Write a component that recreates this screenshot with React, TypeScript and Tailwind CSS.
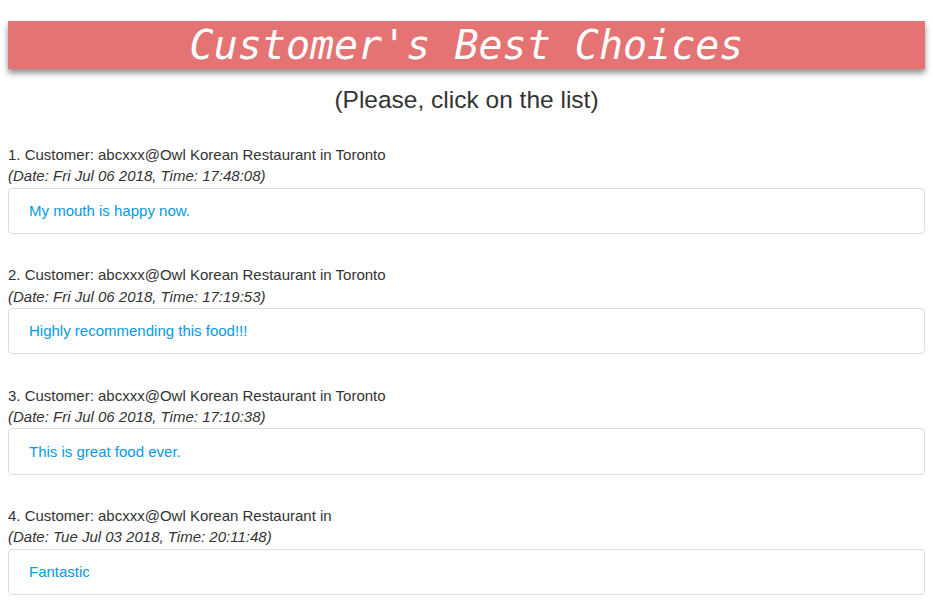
import React from "react";

const items = [
  { n: 1, who: "abcxxx@Owl Korean Restaurant in Toronto", date: "Fri Jul 06 2018", time: "17:48:08", msg: "My mouth is happy now." },
  { n: 2, who: "abcxxx@Owl Korean Restaurant in Toronto", date: "Fri Jul 06 2018", time: "17:19:53", msg: "Highly recommending this food!!!" },
  { n: 3, who: "abcxxx@Owl Korean Restaurant in Toronto", date: "Fri Jul 06 2018", time: "17:10:38", msg: "This is great food ever." },
  { n: 4, who: "abcxxx@Owl Korean Restaurant in", date: "Tue Jul 03 2018", time: "20:11:48", msg: "Fantastic" },
];

export default function App() {
  return (
    <div className="min-h-[611px] bg-white px-2 pb-8 text-[#333]" style={{ fontFamily: '"Liberation Sans", Arial, sans-serif' }}>
      <div
        className="mt-[21px] h-[48px] bg-[#e57373] text-center text-[40px] leading-[48px] text-white italic shadow-[0_4px_6px_rgba(0,0,0,0.45)]"
        style={{ fontFamily: '"DejaVu Sans Mono", monospace' }}
      >
        Customer's Best Choices
      </div>
      <div className="mt-[17px] text-center text-[24.5px] leading-[28px]">(Please, click on the list)</div>
      <div className="mt-[30px] flex flex-col gap-[30.4px]">
        {items.map((it) => (
          <div key={it.n}>
            <div className="text-[15px] leading-[21.43px]">
              {it.n}. Customer: {it.who}
            </div>
            <div className="text-[15px] leading-[21.43px] italic">
              (Date: {it.date}, Time: {it.time})
            </div>
            <div className="mt-[1px] rounded-[4px] border border-[#ddd] px-[20px] py-[11.3px] text-[15px] leading-[21.43px] text-[#039be5]">
              {it.msg}
            </div>
          </div>
        ))}
      </div>
    </div>
  );
}
